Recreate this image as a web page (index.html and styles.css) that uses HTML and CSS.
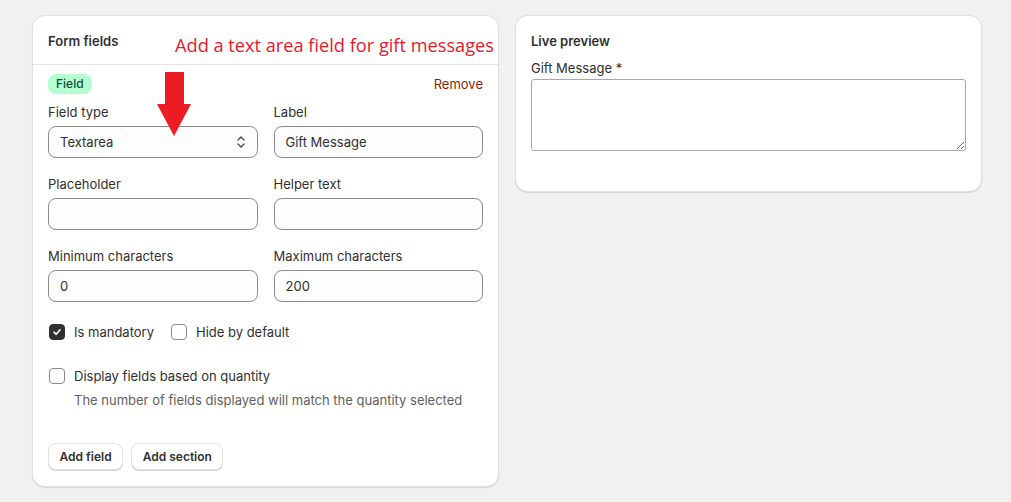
FILE: index.html
```html
<!DOCTYPE html>
<html>
<head>
<meta charset="utf-8">
<link rel="stylesheet" href="styles.css">
</head>
<body>
<div class="page">
  <section class="card left">
    <div class="card-header">
      <h2 class="title">Form fields</h2>
    </div>
    <div class="annotation">Add a text area field for gift messages</div>
    <svg class="arrow" width="34" height="64" viewBox="0 0 34 64">
      <path d="M8 0 H27 V32 H34 L17 64 L0 32 H8 Z" fill="#ec1c24"/>
    </svg>
    <div class="card-body">
      <div class="field-top">
        <span class="badge">Field</span>
        <span class="remove">Remove</span>
      </div>
      <div class="grid">
        <div class="group">
          <label class="lbl">Field type</label>
          <div class="input select">
            <span>Textarea</span>
            <svg class="chev" width="10" height="14" viewBox="0 0 10 14"><path d="M2 5 L5 2 L8 5 M2 9 L5 12 L8 9" fill="none" stroke="#4a4a4a" stroke-width="1.4" stroke-linecap="round" stroke-linejoin="round"/></svg>
          </div>
        </div>
        <div class="group">
          <label class="lbl">Label</label>
          <div class="input">Gift Message</div>
        </div>
        <div class="group">
          <label class="lbl">Placeholder</label>
          <div class="input"></div>
        </div>
        <div class="group">
          <label class="lbl">Helper text</label>
          <div class="input"></div>
        </div>
        <div class="group">
          <label class="lbl">Minimum characters</label>
          <div class="input">0</div>
        </div>
        <div class="group">
          <label class="lbl">Maximum characters</label>
          <div class="input">200</div>
        </div>
      </div>
      <div class="checks">
        <div class="check"><span class="box checked"><svg width="10" height="10" viewBox="0 0 10 10"><path d="M2 5.2 L4.2 7.3 L8 2.8" fill="none" stroke="#fff" stroke-width="1.6" stroke-linecap="round" stroke-linejoin="round"/></svg></span><span>Is mandatory</span></div>
        <div class="check"><span class="box"></span><span>Hide by default</span></div>
      </div>
      <div class="check qty"><span class="box"></span><span>Display fields based on quantity</span></div>
      <div class="help">The number of fields displayed will match the quantity selected</div>
      <div class="buttons">
        <button class="btn">Add field</button>
        <button class="btn">Add section</button>
      </div>
    </div>
  </section>
  <section class="card right">
    <h2 class="title">Live preview</h2>
    <div class="preview-label">Gift Message *</div>
    <textarea class="preview-ta"></textarea>
  </section>
</div>
</body>
</html>
```
FILE: styles.css
```css
* { box-sizing: border-box; }
html, body { margin: 0; padding: 0; }
body {
  background: #f1f1f1;
  font-family: Inter, "Noto Sans", sans-serif;
  font-size: 13px;
  color: #303030;
  width: 1011px;
  height: 502px;
  overflow: hidden;
}
.page {
  display: flex;
  align-items: flex-start;
  gap: 18px;
  padding: 16px 0 0 33px;
}
.card {
  width: 465px;
  background: #fff;
  border-radius: 12px;
  box-shadow: 0 0 0 1px #e0e0e0, 0 1px 1px 1px #d4d4d4;
  position: relative;
}
.left { height: 470px; }
.right { height: 175px; padding: 15px; }
.card-header {
  padding: 15px 15px 13px;
  border-bottom: 1px solid #e3e3e3;
}
.title {
  margin: 0;
  font-size: 13px;
  font-weight: 600;
  line-height: 20px;
  color: #303030;
}
.annotation {
  position: absolute;
  left: 142px;
  top: 16px;
  font-family: "Open Sans", sans-serif;
  font-size: 18.2px;
  line-height: 26px;
  color: #e8192c;
  white-space: nowrap;
}
.arrow {
  position: absolute;
  left: 124px;
  top: 56px;
}
.card-body { padding: 9px 15px 15px; }
.field-top {
  display: flex;
  justify-content: space-between;
  align-items: center;
  height: 20px;
}
.badge {
  background: #b4fed2;
  color: #0c5132;
  border-radius: 8px;
  padding: 0 8px;
  height: 20px;
  line-height: 20px;
  font-size: 12px;
  font-weight: 500;
}
.remove {
  color: #8e1f0b;
  font-size: 13px;
  line-height: 18px;
}
.grid {
  display: grid;
  grid-template-columns: 1fr 1fr;
  column-gap: 16px;
  row-gap: 16px;
  margin-top: 8px;
}
.group { display: flex; flex-direction: column; gap: 4px; }
.lbl { line-height: 20px; font-size: 13px; color: #303030; }
.input {
  height: 32px;
  border: 1px solid #8a8a8a;
  border-radius: 8px;
  background: #fdfdfd;
  padding: 0 12px 0 11px;
  display: flex;
  align-items: center;
  font-size: 13px;
  color: #303030;
}
.select { justify-content: space-between; }
.chev { margin-right: -1px; }
.checks { display: flex; gap: 16px; margin-top: 20px; }
.check { display: flex; align-items: center; gap: 9px; line-height: 20px; }
.box {
  width: 16px; height: 16px;
  border: 1px solid #8a8a8a;
  border-radius: 4px;
  background: #fff;
  display: flex; align-items: center; justify-content: center;
  margin-left: 1px;
}
.box.checked { background: #303030; border-color: #303030; }
.qty { margin-top: 24px; }
.help { margin: 4px 0 0 26px; line-height: 20px; color: #616161; }
.buttons { display: flex; gap: 8px; margin-top: 33px; }
.btn {
  height: 27px;
  padding: 0 10.5px;
  font-family: Inter, "Noto Sans", sans-serif;
  font-size: 12px;
  font-weight: 600;
  color: #303030;
  background: #fff;
  border: 1px solid #e3e3e3;
  border-radius: 8px;
  box-shadow: 0 1px 0 #d0d0d0;
}
.preview-label { margin-top: 7px; line-height: 20px; font-size: 13px; color: #303030; }
.preview-ta {
  display: block;
  width: 435px;
  height: 72px;
  margin-top: 1px;
  border: 1px solid #a8a8a8;
  border-radius: 3px;
  background: #fff;
  resize: vertical;
}
```
